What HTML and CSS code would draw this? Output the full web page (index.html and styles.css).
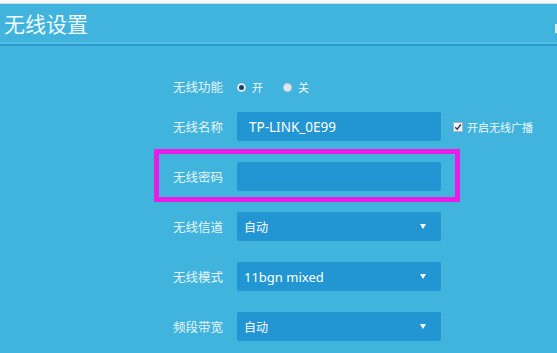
FILE: index.html
```html
<!DOCTYPE html>
<html lang="zh">
<head>
<meta charset="utf-8">
<link rel="stylesheet" href="styles.css">
</head>
<body>
<div class="page">
  <div class="topstrip"></div>
  <header class="header">
    <h1 class="title">无线设置</h1>
    <span class="edge-mark"></span>
  </header>
  <div class="form">
    <div class="row row-radio">
      <span class="label">无线功能</span>
      <div class="radios">
        <span class="radio checked"></span><span class="radio-text">开</span>
        <span class="radio"></span><span class="radio-text">关</span>
      </div>
    </div>
    <div class="row">
      <span class="label">无线名称</span>
      <div class="field input">TP-LINK_0E99</div>
      <div class="check">
        <span class="checkbox"><svg viewBox="0 0 10 10" width="8" height="8"><path d="M1.5 5.2 L4 7.8 L8.6 1.8" fill="none" stroke="#2b3a6a" stroke-width="1.8"/></svg></span>
        <span class="check-text">开启无线广播</span>
      </div>
    </div>
    <div class="row highlighted">
      <span class="label">无线密码</span>
      <div class="field input"></div>
    </div>
    <div class="row">
      <span class="label">无线信道</span>
      <div class="field select"><span>自动</span><span class="arrow"></span></div>
    </div>
    <div class="row">
      <span class="label">无线模式</span>
      <div class="field select"><span class="latin">11bgn mixed</span><span class="arrow"></span></div>
    </div>
    <div class="row">
      <span class="label">频段带宽</span>
      <div class="field select"><span>自动</span><span class="arrow"></span></div>
    </div>
  </div>
</div>
</body>
</html>
```

FILE: styles.css
```css
*, *::before, *::after { box-sizing: border-box; }
html, body { margin: 0; padding: 0; }
body {
  width: 557px;
  height: 353px;
  overflow: hidden;
  background: #40b4dc;
  font-family: "Noto Sans", "Noto Sans CJK SC", sans-serif;
  color: #fff;
}
.page { position: relative; height: 353px; }
.topstrip {
  height: 4px;
  background: linear-gradient(#f6f8f8 0, #f6f8f8 3px, #c9dfe6 3px);
}
.header {
  position: relative;
  height: 42px;
  border-bottom: 2px solid #2b9ccf;
  box-shadow: 0 -2px 0 #52bde2 inset;
  display: flex;
  align-items: center;
  padding-left: 4px;
}
.title {
  margin: 0;
  font-family: "Noto Sans CJK SC", sans-serif;
  font-size: 21px;
  font-weight: 400;
  color: #f4fbfe;
  line-height: 1;
  margin-top: -2px;
}
.edge-mark {
  position: absolute;
  right: 0;
  top: 20px;
  width: 2px;
  height: 9px;
  background: #d6eef6;
}
.form {
  padding-top: 26px;
  padding-left: 160px;
  display: flex;
  flex-direction: column;
  gap: 21px;
}
.row {
  position: relative;
  display: flex;
  align-items: center;
  height: 29px;
}
.row-radio { margin-bottom: -10px; }
.label {
  width: 65px;
  padding-right: 2px;
  text-align: right;
  font-family: "Noto Sans CJK SC", sans-serif;
  font-size: 12.5px;
  color: #e6f4fa;
  margin-right: 12px;
}
.radios {
  display: flex;
  align-items: center;
  font-family: "Noto Sans CJK SC", sans-serif;
  font-size: 11px;
}
.radio {
  width: 9px;
  height: 9px;
  border-radius: 50%;
  background: #dfe6ea;
  border: 1px solid #c6d2d8;
  margin-right: 6px;
  position: relative;
  top: 1px;
}
.radio.checked {
  background: #eef3f5;
  border-color: #d0dade;
}
.radio.checked::after {
  content: "";
  position: absolute;
  left: 1px;
  top: 1px;
  width: 5px;
  height: 5px;
  border-radius: 50%;
  background: #183f6e;
}
.radio-text { margin-right: 20px; color: #f2f9fc; }
.field {
  width: 204px;
  height: 29px;
  background: #2196d3;
  border-radius: 2px;
  display: flex;
  align-items: center;
  color: #fff;
}
.input {
  padding-left: 12px;
  font-size: 13.5px;
}
.select {
  padding-left: 7px;
  padding-right: 15px;
  justify-content: space-between;
  font-family: "Noto Sans CJK SC", sans-serif;
  font-size: 12px;
}
.select .latin {
  font-family: "Noto Sans", sans-serif;
  font-size: 13px;
}
.arrow {
  width: 0;
  height: 0;
  border-left: 3.5px solid transparent;
  border-right: 3.5px solid transparent;
  border-top: 5px solid #fff;
}
.check {
  display: flex;
  align-items: center;
  margin-left: 12px;
}
.checkbox {
  width: 10px;
  height: 10px;
  background: #f0f2f4;
  border: 1px solid #a9b4be;
  display: flex;
  align-items: center;
  justify-content: center;
  margin-right: 4px;
}
.check-text {
  font-family: "Noto Sans CJK SC", sans-serif;
  font-size: 11px;
  color: #eef7fb;
}
.highlighted::before {
  content: "";
  position: absolute;
  left: -6px;
  top: -13px;
  width: 306px;
  height: 53px;
  border: 5px solid #e81ee6;
  pointer-events: none;
}
```
